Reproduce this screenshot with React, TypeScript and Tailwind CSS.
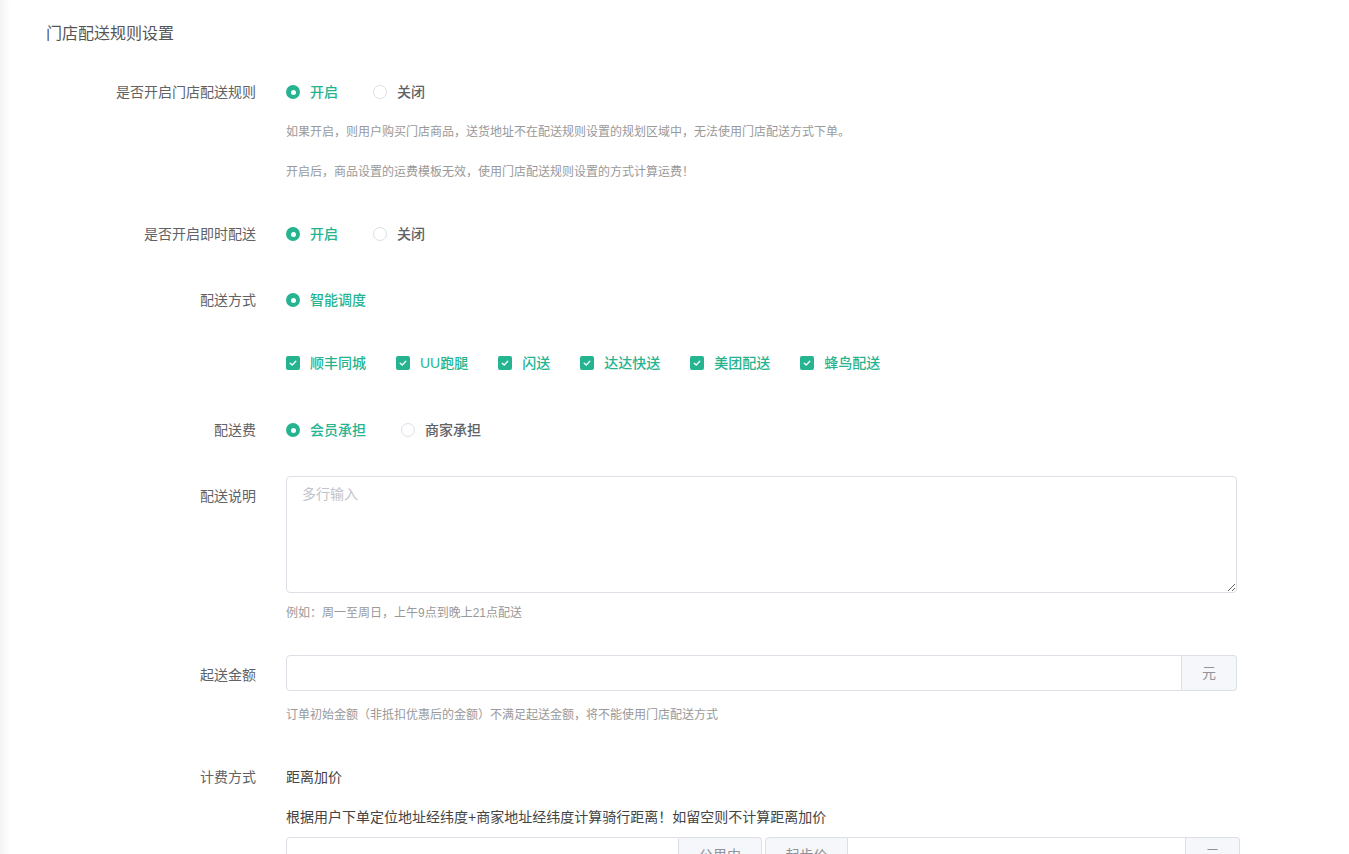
import React from "react";

const GREEN = "text-[#25b48f]";

function Radio({ label, checked }: { label: string; checked?: boolean }) {
  return (
    <span className="flex items-center mr-[35px]">
      {checked ? (
        <span className="w-[14px] h-[14px] rounded-full bg-[#25b48f] flex items-center justify-center">
          <span className="w-[5px] h-[5px] rounded-full bg-white" />
        </span>
      ) : (
        <span className="w-[14px] h-[14px] rounded-full border border-[#dcdfe6] bg-white" />
      )}
      <span className={`ml-[10px] text-[14px] font-medium ${checked ? GREEN : "text-[#606266]"}`}>{label}</span>
    </span>
  );
}

function Check({ label }: { label: string }) {
  return (
    <span className="flex items-center mr-[30px]">
      <span className="w-[14px] h-[14px] rounded-[2px] bg-[#25b48f] flex items-center justify-center">
        <svg width="10" height="10" viewBox="0 0 10 10" fill="none">
          <path d="M2.2 5.2 L4.2 7 L7.8 3.2" stroke="white" strokeWidth="1.3" strokeLinecap="round" strokeLinejoin="round" />
        </svg>
      </span>
      <span className={`ml-[10px] text-[14px] font-medium ${GREEN}`}>{label}</span>
    </span>
  );
}

function Label({ children, className = "" }: { children?: React.ReactNode; className?: string }) {
  return (
    <div className={`w-[256px] shrink-0 text-right pr-0 text-[14px] leading-[20px] text-[#606266] ${className}`}>{children}</div>
  );
}

function Row({ label, children, className = "", labelClass = "" }: { label?: string; children?: React.ReactNode; className?: string; labelClass?: string }) {
  return (
    <div className={`flex ${className}`}>
      <Label className={labelClass}>{label}</Label>
      <div className="ml-[30px] flex-1 min-w-0">{children}</div>
    </div>
  );
}

export default function App() {
  return (
    <div className="min-h-[854px] bg-white shadow-[inset_10px_0_8px_-6px_rgba(0,0,0,0.06)] font-['Liberation_Sans','Noto_Sans_CJK_SC',sans-serif] overflow-hidden">
      <div className="pt-[24px] pl-[46px] text-[16px] leading-[20px] text-[#555]">门店配送规则设置</div>

      <Row label="是否开启门店配送规则" className="mt-[38px]">
        <div className="flex h-[20px] items-center">
          <Radio label="开启" checked />
          <Radio label="关闭" />
        </div>
        <div className="mt-[20px] text-[12px] leading-[20px] text-[#999]">
          如果开启，则用户购买门店商品，送货地址不在配送规则设置的规划区域中，无法使用门店配送方式下单。
        </div>
        <div className="mt-[20px] text-[12px] leading-[20px] text-[#999]">
          开启后，商品设置的运费模板无效，使用门店配送规则设置的方式计算运费！
        </div>
      </Row>

      <Row label="是否开启即时配送" className="mt-[42px]">
        <div className="flex h-[20px] items-center">
          <Radio label="开启" checked />
          <Radio label="关闭" />
        </div>
      </Row>

      <Row label="配送方式" className="mt-[46px]">
        <div className="flex h-[20px] items-center">
          <Radio label="智能调度" checked />
        </div>
      </Row>

      <Row className="mt-[43px]">
        <div className="flex h-[20px] items-center">
          <Check label="顺丰同城" />
          <Check label="UU跑腿" />
          <Check label="闪送" />
          <Check label="达达快送" />
          <Check label="美团配送" />
          <Check label="蜂鸟配送" />
        </div>
      </Row>

      <Row label="配送费" className="mt-[47px]">
        <div className="flex h-[20px] items-center">
          <Radio label="会员承担" checked />
          <Radio label="商家承担" />
        </div>
      </Row>

      <Row label="配送说明" className="mt-[36px]" labelClass="pt-[10px]">
        <textarea
          placeholder="多行输入"
          className="block w-[951px] h-[117px] border border-[#dcdfe6] rounded-[4px] px-[15px] py-[6px] text-[14px] leading-[22px] text-[#606266] placeholder:text-[#c0c4cc] outline-none"
        />
        <div className="mt-[10px] text-[12px] leading-[20px] text-[#999]">例如：周一至周日，上午9点到晚上21点配送</div>
      </Row>

      <Row label="起送金额" className="mt-[32px]" labelClass="pt-[10px]">
        <div className="flex w-[951px] h-[36px]">
          <div className="flex-1 border border-[#dcdfe6] rounded-l-[4px] bg-white" />
          <div className="w-[55px] border border-l-0 border-[#dcdfe6] rounded-r-[4px] bg-[#f5f7fa] flex items-center justify-center text-[14px] text-[#909399]">元</div>
        </div>
        <div className="mt-[14px] text-[12px] leading-[20px] text-[#999]">订单初始金额（非抵扣优惠后的金额）不满足起送金额，将不能使用门店配送方式</div>
      </Row>

      <Row label="计费方式" className="mt-[42px]">
        <div className="text-[14px] leading-[20px] text-[#444]">距离加价</div>
        <div className="mt-[20px] text-[14px] leading-[20px] text-[#444]">根据用户下单定位地址经纬度+商家地址经纬度计算骑行距离！如留空则不计算距离加价</div>
        <div className="mt-[10px] flex">
          <div className="flex w-[476px] h-[36px]">
            <div className="flex-1 border border-[#dcdfe6] rounded-l-[4px] bg-white" />
            <div className="w-[83px] border border-l-0 border-[#dcdfe6] rounded-r-[4px] bg-[#f5f7fa] flex items-center justify-center text-[14px] text-[#909399]">公里内</div>
          </div>
          <div className="ml-[3px] flex w-[475px] h-[36px]">
            <div className="w-[83px] border border-[#dcdfe6] rounded-l-[4px] bg-[#f5f7fa] flex items-center justify-center text-[14px] text-[#909399]">起步价</div>
            <div className="flex-1 border border-l-0 border-[#dcdfe6] bg-white" />
            <div className="w-[54px] border border-l-0 border-[#dcdfe6] rounded-r-[4px] bg-[#f5f7fa] flex items-center justify-center text-[14px] text-[#909399]">元</div>
          </div>
        </div>
      </Row>
      <div className="h-[40px]" />
    </div>
  );
}
